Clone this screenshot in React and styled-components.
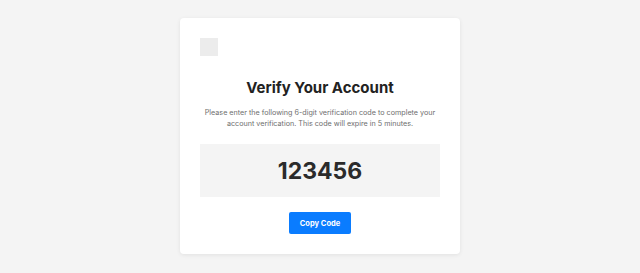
import styled, { createGlobalStyle } from 'styled-components'

const GlobalStyle = createGlobalStyle`
  body {
    margin: 0;
    background: #f4f4f4;
    font-family: Inter, "Liberation Sans", sans-serif;
  }
`

const Page = styled.div`
  display: flex;
  justify-content: center;
  padding-top: 18px;
  height: 273px;
  box-sizing: border-box;
`

const Card = styled.div`
  width: 280px;
  height: 236px;
  box-sizing: border-box;
  background: #fff;
  border-radius: 4px;
  box-shadow: 0 1px 4px rgba(0, 0, 0, 0.08);
  padding: 20px 20px;
  display: flex;
  flex-direction: column;
`

const Logo = styled.div`
  width: 18px;
  height: 18px;
  background: #ececec;
`

const Title = styled.h1`
  margin: 21px 0 0;
  font-size: 15px;
  line-height: 22px;
  font-weight: 700;
  color: #222;
  text-align: center;
`

const Text = styled.p`
  margin: 8px 0 0;
  font-size: 7.2px;
  line-height: 11.5px;
  color: #6e6e6e;
  text-align: center;
`

const CodeBox = styled.div`
  margin-top: 14px;
  height: 55px;
  background: #f4f4f4;
  display: flex;
  align-items: center;
  justify-content: center;
  font-size: 23px;
  font-weight: 700;
  color: #2b2b2b;
`

const Button = styled.button`
  align-self: center;
  margin-top: 15px;
  width: 62px;
  height: 22px;
  border: none;
  border-radius: 2px;
  background: #0a7cff;
  color: #fff;
  font-family: inherit;
  font-size: 7.5px;
  font-weight: 700;
  padding: 0;
`

export default function App() {
  return (
    <Page>
      <GlobalStyle />
      <Card>
        <Logo />
        <Title>Verify Your Account</Title>
        <Text>
          Please enter the following 6-digit verification code to complete your
          account verification. This code will expire in 5 minutes.
        </Text>
        <CodeBox>123456</CodeBox>
        <Button>Copy Code</Button>
      </Card>
    </Page>
  )
}
